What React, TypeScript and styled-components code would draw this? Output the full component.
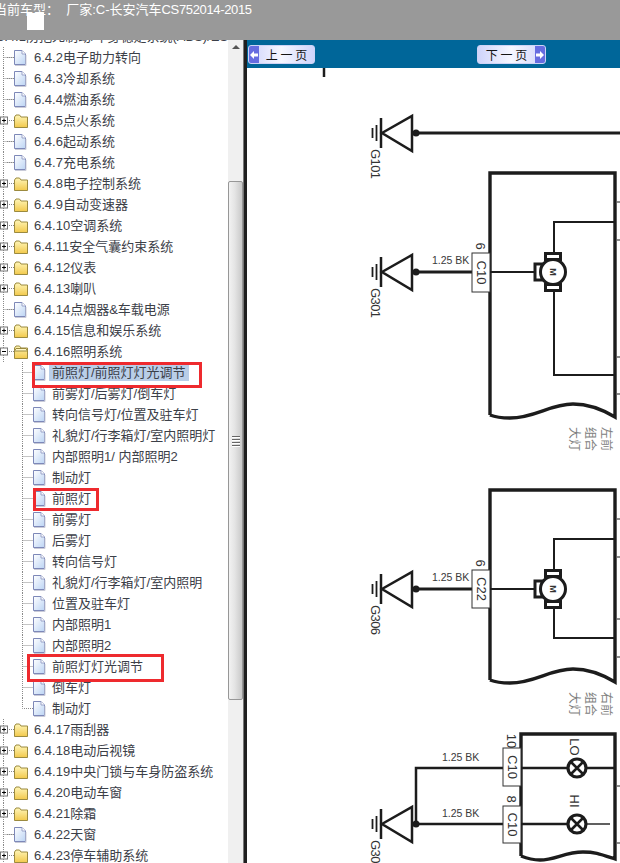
import React from "react";
import styled, { createGlobalStyle } from "styled-components";

const Global = createGlobalStyle`
  html, body { margin: 0; padding: 0; background: #fff; overflow: hidden; }
  body { font-family: "Liberation Sans", "Noto Sans CJK SC", sans-serif; }
`;

const Page = styled.div`
  width: 620px;
  height: 863px;
  display: flex;
  flex-direction: column;
  overflow: hidden;
  position: relative;
`;

const Header = styled.header`
  height: 40px;
  flex: none;
  background: #999999;
  color: #fff;
  font-size: 13px;
  line-height: 20px;
  white-space: pre;
  position: relative;
  z-index: 2;
  overflow: hidden;
`;

const HeaderTitle = styled.div`
  margin-left: -6px;
`;

const ModelCode = styled.span`
  letter-spacing: -0.35px;
`;

const WhiteSquare = styled.span`
  position: absolute;
  left: 27px;
  top: 13px;
  width: 17px;
  height: 17px;
  background: #fff;
`;

const Body = styled.div`
  flex: 1;
  min-height: 0;
  display: grid;
  grid-template-columns: 228px 15px 4px 1fr;
`;

const TreePane = styled.nav`
  position: relative;
  overflow: hidden;
  background: #fff;
`;

const TreeList = styled.ul`
  list-style: none;
  margin: -14px 0 0;
  padding: 0;
`;

const Row = styled.li`
  height: 21px;
  display: flex;
  align-items: center;
  white-space: nowrap;
  font-size: 13px;
  color: #3c4048;
`;

const CutRow = styled(Row)`
  margin-left: -3px;
`;

const Label = styled.span<{ $selected?: boolean }>`
  line-height: 16px;
  padding: 0 3px;
  margin-left: -3px;
  background: ${(p) => (p.$selected ? "#b9cee8" : "transparent")};
`;

const Gutter = styled.svg`
  flex: none;
  height: 21px;
  display: block;
`;

const Mark = styled.div<{ $l: number; $t: number; $w: number; $h: number }>`
  position: absolute;
  left: ${(p) => p.$l}px;
  top: ${(p) => p.$t}px;
  width: ${(p) => p.$w}px;
  height: ${(p) => p.$h}px;
  box-sizing: border-box;
  border: 3px solid #ee2a2e;
`;

const ScrollBar = styled.div`
  background: #f0f0f0;
  display: flex;
  flex-direction: column;
  align-items: stretch;
`;

const ScrollArrow = styled.div`
  height: 141px;
  flex: none;
  display: flex;
  justify-content: center;
  padding-top: 5px;
  box-sizing: border-box;
`;

const ArrowGlyph = styled.span`
  width: 0;
  height: 0;
  border-left: 4px solid transparent;
  border-right: 4px solid transparent;
  border-bottom: 4px solid #555;
`;

const Thumb = styled.div`
  height: 519px;
  flex: none;
  box-sizing: border-box;
  border: 1px solid #979797;
  border-radius: 2px;
  background: linear-gradient(90deg, #f2f2f2 0%, #e4e4e4 45%, #c9c9c9 100%);
  display: flex;
  flex-direction: column;
  justify-content: center;
  align-items: center;
  gap: 2px;
`;

const Grip = styled.span`
  width: 8px;
  height: 1px;
  background: #666;
  box-shadow: 0 1px 0 #fff;
`;

const Splitter = styled.div`
  background: linear-gradient(90deg, #777 0 1px, #1f1f1f 1px 100%);
`;

const Content = styled.main`
  display: flex;
  flex-direction: column;
  min-width: 0;
  background: #fff;
`;

const Toolbar = styled.div`
  height: 28px;
  box-sizing: border-box;
  flex: none;
  background: #006699;
  display: flex;
  justify-content: space-between;
  align-items: flex-start;
  padding: 5px 74px 0 1px;
`;

const PageButton = styled.button<{ $w: number }>`
  width: ${(p) => p.$w}px;
  height: 19px;
  padding: 0;
  border: 1px solid #cdd3f6;
  border-radius: 3px;
  overflow: hidden;
  display: flex;
  align-items: stretch;
  background: linear-gradient(90deg, #cfd4fb 0%, #f6f7ff 50%, #cfd4fb 100%);
  font-family: "Noto Sans CJK SC", sans-serif;
  font-size: 12px;
  color: #151515;
`;

const ButtonText = styled.span`
  flex: 1;
  text-align: center;
  line-height: 17px;
  white-space: pre;
`;

const ButtonArrow = styled.span`
  width: 10px;
  flex: none;
  background: #666ce0;
  display: flex;
  align-items: center;
  justify-content: center;
`;

const Diagram = styled.svg`
  flex: 1;
  display: block;
  min-height: 0;
  font-family: "Liberation Sans", sans-serif;
`;

const Wire = styled.path<{ $w?: number }>`
  fill: none;
  stroke: #1c1c1c;
  stroke-width: ${(p) => p.$w ?? 2.5}px;
`;

const Block = styled.rect`
  fill: #fff;
  stroke: #1c1c1c;
  stroke-width: 3px;
`;

const Ref = styled.text<{ $s?: number }>`
  font-size: ${(p) => p.$s ?? 13}px;
  fill: #333;
  text-anchor: middle;
  dominant-baseline: central;
`;

const GroundName = styled.text`
  font-size: 13px;
  fill: #333;
  letter-spacing: -0.6px;
  dominant-baseline: hanging;
`;

const Gauge = styled.text`
  font-size: 10.5px;
  fill: #3a3a3a;
`;

const Caption = styled.text`
  font-family: "Noto Sans CJK SC", sans-serif;
  font-size: 12px;
  fill: #808080;
`;

type Kind = "doc" | "closed" | "open";

const DocIcon = ({ x }: { x: number }) => (
  <g transform={`translate(${x},3)`}>
    <path d="M.5.5H8L11.5 4V14.5H.5Z" fill="url(#docFill)" stroke="#7d88b8" />
    <path d="M8 .5V4H11.5" fill="#fff" stroke="#9aa3c8" />
    <path d="M1 15.5H12V5" fill="none" stroke="#c9cbd8" />
  </g>
);

const FolderIcon = ({ open }: { open?: boolean }) => (
  <g transform="translate(14,4)">
    <path d="M.5 3V13.5H13.5V3H7L5.5 1H2Z" fill="url(#folderFill)" stroke="#9b8a3f" />
    {open && <path d="M.5 6L2 3.5H12L13.5 6Z" fill="#fff7c8" stroke="#9b8a3f" />}
  </g>
);

const Defs = () => (
  <svg width="0" height="0" style={{ position: "absolute" }}>
    <defs>
      <linearGradient id="docFill" x1="0" y1="0" x2="1" y2="1">
        <stop offset="0" stopColor="#ffffff" />
        <stop offset="1" stopColor="#bcd4f4" />
      </linearGradient>
      <linearGradient id="folderFill" x1="0" y1="0" x2="0" y2="1">
        <stop offset="0" stopColor="#fff6b8" />
        <stop offset="1" stopColor="#f2c94c" />
      </linearGradient>
    </defs>
  </svg>
);

const dots = { stroke: "#8a8a8a", strokeDasharray: "1 1", fill: "none" } as const;

const TopGutter = ({ kind }: { kind: Kind }) => (
  <Gutter width={34} viewBox="0 0 34 21">
    <path d="M3.5 0V21" {...dots} />
    <path d="M7 10.5H14" {...dots} />
    {kind === "doc" ? (
      <>
        <path d="M3.5 10.5H14" {...dots} />
        <DocIcon x={14} />
      </>
    ) : (
      <>
        <rect x="0.5" y="7" width="7" height="7" fill="#fff" stroke="#777" />
        <path d="M2 10.5H6" stroke="#000" />
        {kind === "closed" && <path d="M4 8.5V12.5" stroke="#000" />}
        <FolderIcon open={kind === "open"} />
      </>
    )}
  </Gutter>
);

const SubGutter = ({ last }: { last?: boolean }) => (
  <Gutter width={52} viewBox="0 0 52 21">
    <path d={last ? "M22.5 0V10.5H33" : "M22.5 0V21M22.5 10.5H33"} {...dots} />
    <DocIcon x={33} />
  </Gutter>
);

const before: [string, Kind][] = [
  ["6.4.2电子助力转向", "doc"],
  ["6.4.3冷却系统", "doc"],
  ["6.4.4燃油系统", "doc"],
  ["6.4.5点火系统", "closed"],
  ["6.4.6起动系统", "doc"],
  ["6.4.7充电系统", "doc"],
  ["6.4.8电子控制系统", "closed"],
  ["6.4.9自动变速器", "closed"],
  ["6.4.10空调系统", "closed"],
  ["6.4.11安全气囊约束系统", "closed"],
  ["6.4.12仪表", "closed"],
  ["6.4.13喇叭", "closed"],
  ["6.4.14点烟器&车载电源", "doc"],
  ["6.4.15信息和娱乐系统", "closed"],
  ["6.4.16照明系统", "open"],
];

const lighting = [
  "前照灯/前照灯灯光调节",
  "前雾灯/后雾灯/倒车灯",
  "转向信号灯/位置及驻车灯",
  "礼貌灯/行李箱灯/室内照明灯",
  "内部照明1/ 内部照明2",
  "制动灯",
  "前照灯",
  "前雾灯",
  "后雾灯",
  "转向信号灯",
  "礼貌灯/行李箱灯/室内照明",
  "位置及驻车灯",
  "内部照明1",
  "内部照明2",
  "前照灯灯光调节",
  "倒车灯",
  "制动灯",
];

const after: [string, Kind][] = [
  ["6.4.17雨刮器", "closed"],
  ["6.4.18电动后视镜", "closed"],
  ["6.4.19中央门锁与车身防盗系统", "closed"],
  ["6.4.20电动车窗", "closed"],
  ["6.4.21除霜", "closed"],
  ["6.4.22天窗", "doc"],
  ["6.4.23停车辅助系统", "closed"],
];

const Ground = ({ y, label }: { y: number; label: string }) => (
  <g>
    <Wire $w={2.5} d={`M412 ${y - 17}V${y + 18}L382 ${y}Z`} />
    <Wire $w={2.5} d={`M381 ${y - 15}V${y + 15}`} />
    <Wire $w={1.8} d={`M376.5 ${y - 8}V${y + 8}`} />
    <Wire $w={1.8} d={`M372.5 ${y - 5}V${y + 5}`} />
    <GroundName transform={`translate(381,${y + 16}) rotate(90)`}>{label}</GroundName>
  </g>
);

const Rot = ({ x, y, s, children }: { x: number; y: number; s?: number; children: React.ReactNode }) => (
  <Ref $s={s} transform={`translate(${x},${y}) rotate(90)`}>
    {children}
  </Ref>
);

const Connector = ({ x, y1, y2, label, pin }: { x: number; y1: number; y2: number; label: string; pin: string }) => (
  <g>
    <rect x={x} y={y1} width={18} height={y2 - y1} fill="#fff" stroke="#333" strokeWidth="1" />
    <Rot x={x + 9} y={(y1 + y2) / 2}>{label}</Rot>
    <Rot x={x + 8} y={y1 - 7}>{pin}</Rot>
  </g>
);

const Motor = ({ y }: { y: number }) => (
  <g>
    <Block x={535} y={y - 8} width={7} height={16} />
    <Block x={545.5} y={y - 18.5} width={15} height={6} />
    <Block x={545.5} y={y + 12.5} width={15} height={6} />
    <circle cx="553" cy={y} r="12.5" fill="#fff" stroke="#1c1c1c" strokeWidth="3" />
    <Rot x={553} y={y} s={9}>
      <tspan fontWeight="bold">M</tspan>
    </Rot>
  </g>
);

const Lamp = ({ y }: { y: number }) => (
  <g>
    <circle cx="577" cy={y} r="9" fill="#fff" stroke="#1c1c1c" strokeWidth="3.2" />
    <Wire $w={2.6} d={`M570.5 ${y - 6.5}L583.5 ${y + 6.5}M583.5 ${y - 6.5}L570.5 ${y + 6.5}`} />
  </g>
);

const EdgeTicks = ({ ys }: { ys: number[] }) => (
  <Wire $w={1} d={ys.map((y) => `M617 ${y}H620`).join("")} />
);

const Headlamp = ({
  top,
  waveLeft,
  conn,
  motor,
  wireTop,
  wireBottom,
  ticks,
  refs,
  capY,
  capFirst,
  label,
}: {
  top: number;
  waveLeft: number;
  conn: [number, number];
  motor: number;
  wireTop: number;
  wireBottom: number;
  ticks: number[];
  refs: string;
  capY: number;
  capFirst: string;
  label: string;
}) => (
  <g>
    <Wire
      $w={3.4}
      d={`M490 ${waveLeft}V${top}H615V${waveLeft + 2}C600 ${waveLeft - 7} 585 ${waveLeft - 11} 573 ${waveLeft - 11}C550 ${waveLeft - 11} 535 ${waveLeft + 3} 510 ${waveLeft + 3}C500 ${waveLeft + 3} 495 ${waveLeft + 2} 490 ${waveLeft}`}
    />
    <Ground y={motor} label={label} />
    <Wire $w={3} d={`M416 ${motor}H472`} />
    <circle cx="416" cy={motor} r="3.5" fill="#1c1c1c" />
    <Gauge x="432" y={motor - 8}>1.25 BK</Gauge>
    <Connector x={472} y1={conn[0]} y2={conn[1]} label={refs} pin="6" />
    <Wire $w={2} d={`M490 ${motor}H535`} />
    <Wire $w={2} d={`M554 ${motor - 18}V${wireTop}H615M554 ${motor + 18}V${wireBottom}H615`} />
    <Motor y={motor} />
    <EdgeTicks ys={ticks} />
    <Rot x={625} y={(ticks[0] + ticks[1]) / 2}>C15</Rot>
    <Rot x={625} y={ticks[0] - 7}>1</Rot>
    <Rot x={625} y={(ticks[2] + ticks[3]) / 2}>C15</Rot>
    <Rot x={625} y={ticks[2] - 7}>9</Rot>
    {[capFirst + "前", "组合", "大灯"].map((t, i) => (
      <Caption key={t} transform={`translate(${602 - i * 16},${capY}) rotate(90)`}>
        {t}
      </Caption>
    ))}
  </g>
);

export default function App() {
  return (
    <Page>
      <Global />
      <Defs />
      <Header>
        <HeaderTitle>
          当前车型：  厂家:C-长安汽车<ModelCode>CS752014-2015</ModelCode>
        </HeaderTitle>
        <WhiteSquare />
      </Header>
      <Body>
        <TreePane>
          <TreeList>
            <CutRow>
              <Label>6.4.1防抱死制动/车身稳定系统(ABS)/ES</Label>
            </CutRow>
            {before.map(([t, k]) => (
              <Row key={t}>
                <TopGutter kind={k} />
                <Label>{t}</Label>
              </Row>
            ))}
            {lighting.map((t, i) => (
              <Row key={i}>
                <SubGutter last={i === lighting.length - 1} />
                <Label $selected={i === 0}>{t}</Label>
              </Row>
            ))}
            {after.map(([t, k]) => (
              <Row key={t}>
                <TopGutter kind={k} />
                <Label>{t}</Label>
              </Row>
            ))}
          </TreeList>
          <Mark $l={32} $t={322} $w={170} $h={26} />
          <Mark $l={33} $t={448} $w={66} $h={23} />
          <Mark $l={27} $t={614} $w={137} $h={28} />
        </TreePane>
        <ScrollBar>
          <ScrollArrow>
            <ArrowGlyph />
          </ScrollArrow>
          <Thumb>
            <Grip />
            <Grip />
            <Grip />
            <Grip />
          </Thumb>
        </ScrollBar>
        <Splitter />
        <Content>
          <Toolbar>
            <PageButton $w={67}>
              <ButtonArrow>
                <svg width="8" height="10" viewBox="0 0 8 10">
                  <path d="M0 5L4 1V3.5H8V6.5H4V9Z" fill="#fff" />
                </svg>
              </ButtonArrow>
              <ButtonText>上 一 页</ButtonText>
            </PageButton>
            <PageButton $w={69}>
              <ButtonText>下 一 页</ButtonText>
              <ButtonArrow>
                <svg width="8" height="10" viewBox="0 0 8 10">
                  <path d="M8 5L4 1V3.5H0V6.5H4V9Z" fill="#fff" />
                </svg>
              </ButtonArrow>
            </PageButton>
          </Toolbar>
          <Diagram viewBox="247 68 373 795">
            <Wire $w={2.5} d="M324 68V77" />
            <Ground y={133} label="G101" />
            <Wire $w={3} d="M416 133H620" />
            <circle cx="416" cy="133" r="3.5" fill="#1c1c1c" />

            <Headlamp
              top={173}
              waveLeft={415}
              conn={[253, 292]}
              motor={272}
              wireTop={222}
              wireBottom={375}
              ticks={[202, 240, 357, 394]}
              refs="C10"
              capY={427}
              capFirst="左"
              label="G301"
            />
            <Headlamp
              top={490}
              waveLeft={680}
              conn={[570, 608]}
              motor={589}
              wireTop={539}
              wireBottom={638}
              ticks={[519, 557, 619, 657]}
              refs="C22"
              capY={692}
              capFirst="右"
              label="G306"
            />

            <Wire
              $w={3.4}
              d="M521 856V734H615V859C600 854 595 852 583 852C565 852 555 860 540 860C532 860 526 858 521 856"
            />
            <Ground y={824} label="G305" />
            <Wire d="M503 768H416V824H503" />
            <circle cx="416" cy="824" r="3.5" fill="#1c1c1c" />
            <Gauge x="442" y="761">1.25 BK</Gauge>
            <Gauge x="442" y="817">1.25 BK</Gauge>
            <Connector x={503} y1={748} y2={786} label="C10" pin="10" />
            <Connector x={503} y1={806} y2={843} label="C10" pin="8" />
            <Wire d="M521 768H615M521 824H568" />
            <Wire $w={1.4} d="M586 824H610" />
            <Lamp y={768} />
            <Lamp y={824} />
            <Rot x={574} y={747}>LO</Rot>
            <Rot x={574} y={801}>HI</Rot>
            <EdgeTicks ys={[786, 843]} />
            <Rot x={625} y={767}>C15</Rot>
            <Rot x={625} y={824}>C15</Rot>
            <Rot x={625} y={743}>1</Rot>
            <Rot x={625} y={799}>9</Rot>
          </Diagram>
        </Content>
      </Body>
    </Page>
  );
}
